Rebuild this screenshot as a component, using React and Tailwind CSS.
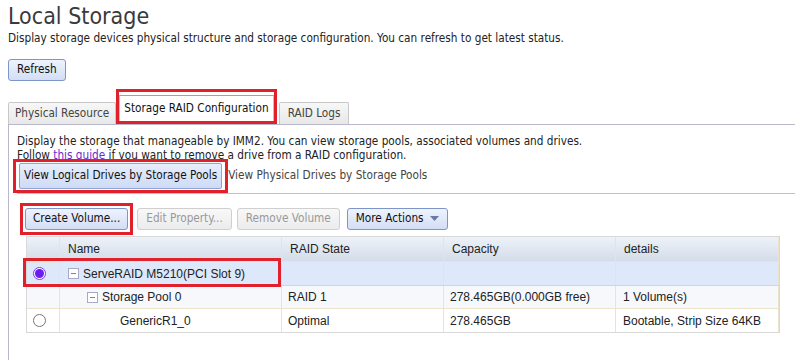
const ui = { fontFamily: '"DejaVu Sans Condensed", "DejaVu Sans", sans-serif' }
const arial = { fontFamily: '"Liberation Sans", Arial, sans-serif' }

function Minus() {
  return (
    <span className="inline-flex w-[11px] h-[11px] border border-[#a8a8c8] bg-white items-center justify-center mr-[4px]">
      <span className="w-[5px] h-px bg-[#8080a0]" />
    </span>
  )
}

function Radio({ checked }) {
  return (
    <span className={`inline-flex w-[13px] h-[13px] rounded-full border items-center justify-center bg-white ${checked ? 'border-[#7a3cf0]' : 'border-[#777]'}`}>
      {checked && <span className="w-[9px] h-[9px] rounded-full bg-[#6a1df0]" />}
    </span>
  )
}

export default function App() {
  const cell = 'border-r border-[#ebe3cc] px-[8px] h-full flex items-center'
  const row = 'grid grid-cols-[33px_222px_162px_172px_1fr]'
  return (
    <div className="w-[795px] h-[360px] bg-white overflow-hidden text-[#222]" style={ui}>
      <div className="pl-[8px] pt-[2px]">
        <h1 className="text-[23px] leading-[28px] text-[#3a3a3a]">Local Storage</h1>
        <p className="text-[11.7px] leading-[14px] mt-[1px]">Display storage devices physical structure and storage configuration. You can refresh to get latest status.</p>
        <button className="mt-[14px] h-[22px] px-[8px] text-[11.7px] rounded-[3px] border border-[#7d95c9] bg-gradient-to-b from-[#eef3fd] to-[#d3def5] text-[#111]">Refresh</button>
      </div>

      {/* tabs */}
      <div className="flex items-end pl-[8px] mt-[8px] h-[35px]">
        <div className="h-[22px] px-[6px] flex items-center text-[11.7px] text-[#444] border border-b-0 border-[#c8c8c8] bg-gradient-to-b from-[#f7f7f7] to-[#e8e8e8] rounded-t-[2px]">Physical Resource</div>
        <div className="h-[35px] flex items-end border-[3px] border-[#e0202a]">
          <div className="h-[26px] px-[4px] flex items-center text-[11.7px] text-[#111] bg-white border border-b-0 border-[#c0c0d0] border-t-[#8aa0e0]">Storage RAID Configuration</div>
        </div>
        <div className="ml-[2px] h-[22px] px-[8px] flex items-center text-[11.7px] text-[#444] border border-b-0 border-[#c8c8c8] bg-gradient-to-b from-[#f7f7f7] to-[#e8e8e8] rounded-t-[2px]">RAID Logs</div>
      </div>

      {/* panel */}
      <div className="ml-[8px] h-[240px] border-l border-t border-[#b8b8cc] pl-[8px] pt-[9px] text-[11.7px]">
        <p className="leading-[14px]">Display the storage that manageable by IMM2. You can view storage pools, associated volumes and drives.</p>
        <p className="leading-[14px]">Follow <span className="text-[#6a2ad0]">this guide</span> if you want to remove a drive from a RAID configuration.</p>
        <div className="flex items-center -mt-[3px] h-[34px] -ml-[4px]">
          <div className="border-[3px] border-[#e0202a] px-[3px] py-[1px]">
            <button className="h-[26px] px-[4px] rounded-[2px] border border-[#8ea4d4] bg-gradient-to-b from-[#e7eefc] to-[#cddbf6] text-[#111]">View Logical Drives by Storage Pools</button>
          </div>
          <span className="text-[#444]">View Physical Drives by Storage Pools</span>
        </div>
        <div className="h-px bg-[#c0c0d0]" />

        <div className="flex items-center mt-[9px] ml-[3px] gap-[4px]">
          <div className="border-[3px] border-[#e0202a] p-[2px]">
            <button className="h-[22px] px-[7px] rounded-[3px] border border-[#7d95c9] bg-gradient-to-b from-[#eef3fd] to-[#d3def5] text-[#111]">Create Volume...</button>
          </div>
          <button className="h-[22px] px-[8px] rounded-[3px] border border-[#cfcfcf] bg-gradient-to-b from-[#f8f8f8] to-[#ececec] text-[#999]">Edit Property...</button>
          <button className="ml-[1px] h-[22px] px-[8px] rounded-[3px] border border-[#cfcfcf] bg-gradient-to-b from-[#f8f8f8] to-[#ececec] text-[#999]">Remove Volume</button>
          <button className="ml-[3px] h-[22px] px-[8px] rounded-[3px] border border-[#7d95c9] bg-gradient-to-b from-[#eef3fd] to-[#d3def5] text-[#111] flex items-center gap-[6px]">
            More Actions
            <svg width="9" height="6" viewBox="0 0 9 6"><path d="M0 0h9L4.5 5z" fill="#6a7aa0" /></svg>
          </button>
        </div>

        {/* table */}
        <div className="ml-[9px] mt-[1px] w-[754px] border border-[#d8d8d8] text-[12px]" style={arial}>
          <div className={`${row} h-[25px] bg-gradient-to-b from-[#eef2f9] to-[#d3dce8] border-b border-[#ece4c8]`}>
            <div className={cell} />
            <div className={cell}>Name</div>
            <div className={cell}>RAID State</div>
            <div className={cell}>Capacity</div>
            <div className={cell}>details</div>
          </div>
          <div className={`relative ${row} h-[24px] bg-[#dde8fb] border-b border-[#c8d6f0]`}>
            <div className={`${cell} pl-[5px] border border-dashed border-[#5a2ab0]`}><Radio checked /></div>
            <div className={cell}><Minus />ServeRAID M5210(PCI Slot 9)</div>
            <div className={cell} />
            <div className={cell} />
            <div className={cell} />
            <div className="absolute left-[-4px] top-[-4px] w-[258px] h-[29px] border-[3px] border-[#e0202a]" />
          </div>
          <div className={`${row} h-[23px] bg-[#f6f8fc] border-b border-[#ece4c8]`}>
            <div className={cell} />
            <div className={`${cell} pl-[27px]`}><Minus />Storage Pool 0</div>
            <div className={`${cell} pl-[6px]`}>RAID 1</div>
            <div className={`${cell} pl-[6px]`}>278.465GB(0.000GB free)</div>
            <div className={`${cell} pl-[7px]`}>1 Volume(s)</div>
          </div>
          <div className={`${row} h-[23px] bg-white`}>
            <div className={`${cell} pl-[6px]`}><Radio /></div>
            <div className={`${cell} pl-[60px]`}>GenericR1_0</div>
            <div className={`${cell} pl-[6px]`}>Optimal</div>
            <div className={`${cell} pl-[6px]`}>278.465GB</div>
            <div className={`${cell} pl-[7px]`}>Bootable, Strip Size 64KB</div>
          </div>
        </div>
      </div>
    </div>
  )
}
